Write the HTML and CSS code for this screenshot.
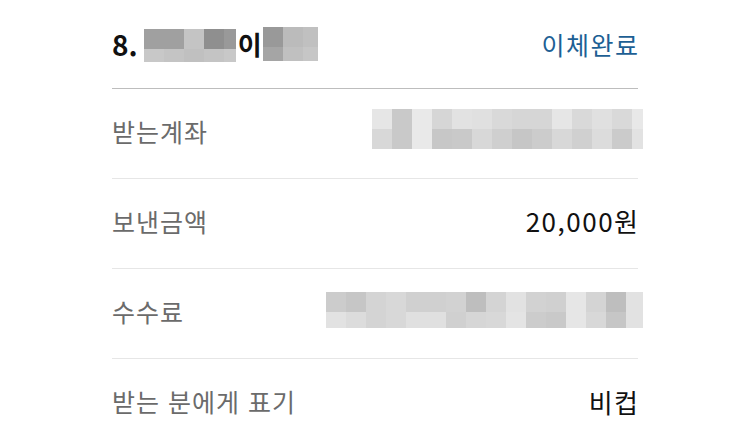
FILE: index.html
```html
<!DOCTYPE html>
<html lang="ko">
<head>
  <meta charset="UTF-8">
  <meta name="viewport" content="width=device-width, initial-scale=1.0">
  <title>이체 결과</title>
  <link rel="stylesheet" href="styles.css">
</head>
<body>
  <section class="transfer">
    <div class="transfer-head">
      <h2 class="transfer-title">
        <span class="num">8.</span>
        <span class="blur blur-name1"></span>
        <span class="name-tail">이</span>
        <span class="blur blur-name2"></span>
      </h2>
      <span class="status">이체완료</span>
    </div>

    <div class="row">
      <span class="label">받는계좌</span>
      <span class="blur blur-account"></span>
    </div>
    <div class="row">
      <span class="label">보낸금액</span>
      <span class="value">20,000원</span>
    </div>
    <div class="row">
      <span class="label">수수료</span>
      <span class="blur blur-fee"></span>
    </div>
    <div class="row">
      <span class="label">받는 분에게 표기</span>
      <span class="value">비컵</span>
    </div>
  </section>
</body>
</html>
```

FILE: styles.css
```css
/* Base */
*, *::before, *::after { box-sizing: border-box; margin: 0; padding: 0; }
body { font-family: "Noto Sans CJK KR", "Noto Sans", sans-serif; background: #fff; color: #111; overflow: hidden; }

/* Card */
.transfer { padding: 0 112px; }

.transfer-head { height: 89px; display: flex; align-items: center; justify-content: space-between; border-bottom: 1px solid #bdbdbd; }
.transfer-title { display: flex; align-items: center; font-size: 28px; font-weight: 700; line-height: 1; color: #111; }
.transfer-title .num { margin-right: 6px; }
.name-tail { margin: 0 1px 0 2px; font-size: 26px; font-weight: 700; }
.status { font-size: 25px; letter-spacing: 1.5px; margin-right: -1.5px; color: #1d5f94; line-height: 1; }

.row { height: 90px; padding-bottom: 5px; display: flex; align-items: center; justify-content: space-between; border-bottom: 1px solid #e6e6e6; }
.row:last-child { border-bottom: 0; }
.label { font-size: 25px; letter-spacing: 1px; color: #6b6b6b; line-height: 1; }
.value { font-size: 26px; letter-spacing: 1.5px; margin-right: -1.5px; color: #111; line-height: 1; }

/* Mosaic blur over private data */
.blur { display: block; background-repeat: no-repeat; }

.blur-name1 {
  width: 92px; height: 33px; margin-top: 2px;
  background-image:
    linear-gradient(to right, #a0a0a0 0 40px, #c4c4c4 40px 60px, #8f8f8f 60px 80px, #999 80px),
    linear-gradient(to right, #c8c8c8 0 20px, #c4c4c4 20px 40px, #c0c0c0 40px 60px, #c4c4c4 60px 80px, #c8c8c8 80px);
  background-size: 100% 20px, 100% 13px;
  background-position: top, bottom;
}
.blur-name2 {
  width: 55px; height: 34px;
  background-image:
    linear-gradient(to right, #999 0 20px, #bbb 20px 40px, #c0c0c0 40px),
    linear-gradient(to right, #a5a5a5 0 20px, #c0c0c0 20px 40px, #c6c6c6 40px);
  background-size: 100% 20px, 100% 14px;
  background-position: top, bottom;
}

.blur-account {
  width: 271px; height: 40px; margin-right: -5px; margin-top: -4px;
  background-image:
    linear-gradient(to right, #e6e6e6 0 20px, #c9c9c9 20px 40px, #e9e9e9 40px 60px, #d6d6d6 60px 80px, #e2e2e2 80px 100px, #e0e0e0 100px 120px, #d9d9d9 120px 140px, #d6d6d6 140px 160px, #d6d6d6 160px 180px, #e6e6e6 180px 200px, #d9d9d9 200px 220px, #e0e0e0 220px 240px, #d9d9d9 240px 260px, #e8e8e8 260px),
    linear-gradient(to right, #d8d8d8 0 20px, #c9c9c9 20px 40px, #e9e9e9 40px 60px, #c7c7c7 60px 80px, #c9c9c9 80px 100px, #d8d8d8 100px 120px, #cfcfcf 120px 140px, #c6c6c6 140px 160px, #cccccc 160px 180px, #d8d8d8 180px 200px, #d0d0d0 200px 220px, #dcdcdc 220px 240px, #cbcbcb 240px 260px, #e2e2e2 260px);
  background-size: 100% 20px, 100% 20px;
  background-position: top, bottom;
}

.blur-fee {
  width: 317px; height: 36px; margin-right: -5px; margin-top: -2px;
  background-image:
    linear-gradient(to right, #cccccc 0 20px, #c6c6c6 20px 40px, #d4d4d4 40px 60px, #d8d8d8 60px 80px, #d0d0d0 80px 100px, #d0d0d0 100px 120px, #d2d2d2 120px 140px, #bebebe 140px 160px, #d4d4d4 160px 180px, #e2e2e2 180px 200px, #d2d2d2 200px 220px, #d0d0d0 220px 240px, #e6e6e6 240px 260px, #d4d4d4 260px 280px, #bebebe 280px 300px, #e2e2e2 300px),
    linear-gradient(to right, #e2e2e2 0 20px, #dcdcdc 20px 40px, #d4d4d4 40px 60px, #d8d8d8 60px 80px, #e0e0e0 80px 100px, #e0e0e0 100px 120px, #d0d0d0 120px 140px, #d6d6d6 140px 160px, #d8d8d8 160px 180px, #e4e4e4 180px 200px, #cccccc 200px 220px, #c9c9c9 220px 240px, #e6e6e6 240px 260px, #d8d8d8 260px 280px, #c6c6c6 280px 300px, #e2e2e2 300px);
  background-size: 100% 20px, 100% 16px;
  background-position: top, bottom;
}
```
